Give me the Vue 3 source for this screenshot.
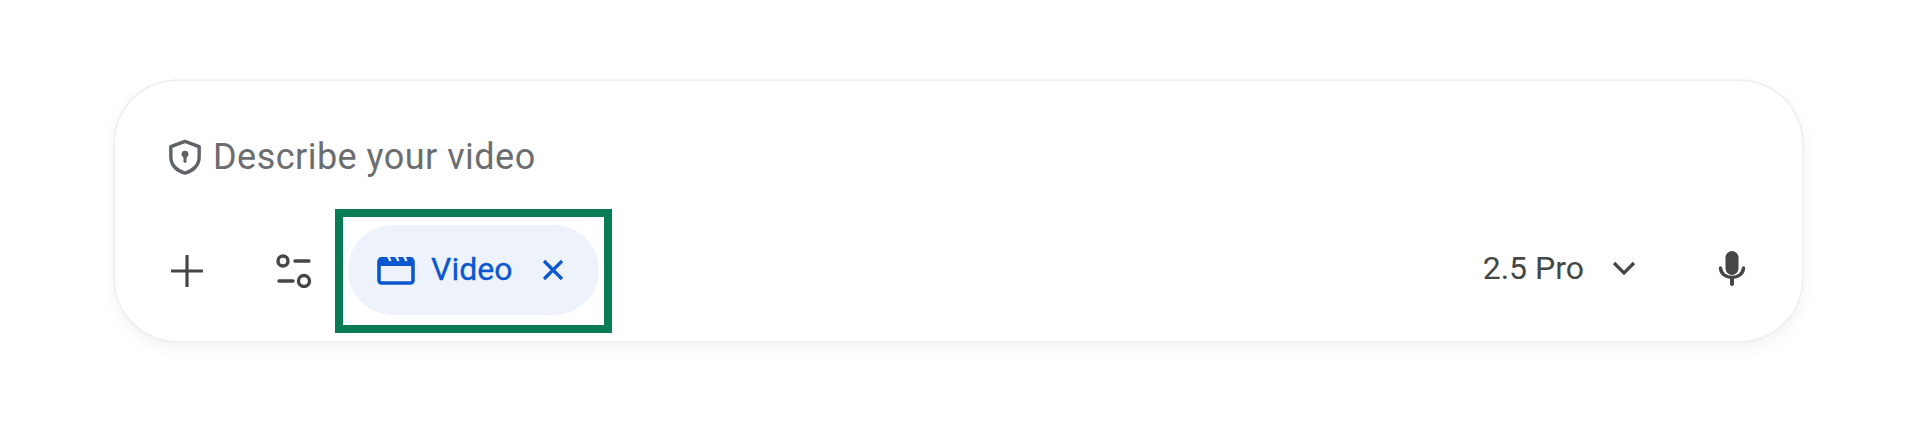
<script setup>
  const placeholder = "Describe your video";
  const model = "2.5 Pro";
</script>

<template>
  <div class="page">
    <div class="prompt">
      <div class="prompt__input">
        <svg class="shield" viewBox="0 0 36 38" fill="none">
          <path d="M18 2.500 33 8v11c0 8.500-6.200 14.800-15 17C9.200 33.800 3 27.500 3 19V8z" stroke="#5f6368" stroke-width="3.600" stroke-linejoin="round"/>
          <circle cx="18" cy="16" r="3.600" fill="#5f6368"/>
          <rect x="16.400" y="17" width="3.200" height="8" rx="1" fill="#5f6368"/>
        </svg>
        <span class="prompt__placeholder">{{ placeholder }}</span>
      </div>
      <div class="prompt__toolbar">
        <button class="tool tool--plus">
          <svg viewBox="0 0 32 32" width="32" height="32" fill="none">
            <path d="M16 1v30M1 16h30" stroke="#444746" stroke-width="3.200" stroke-linecap="round"/>
          </svg>
        </button>
        <button class="tool tool--tune">
          <svg viewBox="0 0 36 34" width="36" height="34" fill="none" stroke="#444746" stroke-width="3.400" stroke-linecap="round">
            <circle cx="7" cy="7" r="5"/>
            <path d="M19 7h14M3 27h14"/>
            <circle cx="28" cy="27" r="5.500"/>
          </svg>
        </button>
        <div class="highlight">
          <div class="chip">
            <svg class="chip__icon" viewBox="0 0 38 30" width="38" height="30" fill="none">
              <rect x="2" y="4" width="34" height="24" rx="2.500" stroke="#0b57d0" stroke-width="3.600"/>
              <rect x="2" y="2" width="34" height="9" rx="1.500" fill="#0b57d0"/>
              <path d="M11 1l2.500 5M19 1l2.500 5M27 1l2.500 5" stroke="#edf2fb" stroke-width="2.400"/>
            </svg>
            <span class="chip__label">Video</span>
            <svg class="chip__close" viewBox="0 0 22 22" width="22" height="22" fill="none">
              <path d="M2 2l18 18M20 2 2 20" stroke="#0b57d0" stroke-width="3.200"/>
            </svg>
          </div>
        </div>
        <div class="model">
          <span class="model__name">{{ model }}</span>
          <svg viewBox="0 0 24 14" width="24" height="14" fill="none">
            <path d="M2 2l10 10L22 2" stroke="#444746" stroke-width="3.200"/>
          </svg>
        </div>
        <svg class="mic" viewBox="0 0 28 36" width="28" height="36">
          <rect x="7.500" y="0" width="13" height="24" rx="6.500" fill="#444746"/>
          <path d="M2.500 17c.5 6 5.500 9.500 11.500 9.500S25 23 25.500 17" fill="none" stroke="#444746" stroke-width="3.400" stroke-linecap="round"/>
          <path d="M12 26h4v7.500L14 35.500l-2-2z" fill="#444746"/>
        </svg>
      </div>
    </div>
  </div>
</template>

<style>
  body{
    background: #ffffff;
  }
</style>

<style scoped>
  .page{
    height: 433px;
    box-sizing: border-box;
    padding: 81px 118px 0 115px;
    font-family: Roboto, "Liberation Sans", sans-serif;
    background: #ffffff;
  }

  /* card */
  .prompt{
    height: 260px;
    box-sizing: border-box;
    border-radius: 62px;
    background: #ffffff;
    box-shadow: 0 0 0 1.500px #eeeeee, 0 6px 18px rgba(0, 0, 0, 0.06);
    padding: 57px 0 0 53px;
    display: flex;
    flex-direction: column;
  }

  .prompt__input{
    display: flex;
    align-items: center;
    gap: 11px;
    height: 38px;
  }

  .shield{
    width: 34px;
    height: 38px;
    flex: none;
  }

  .prompt__placeholder{
    font-size: 36px;
    letter-spacing: 0.47px;
    color: #6b6d70;
  }

  /* bottom row */
  .prompt__toolbar{
    display: flex;
    align-items: center;
    margin-top: 33px;
    height: 124px;
  }

  .tool{
    border: none;
    background: none;
    padding: 0;
    display: flex;
  }

  .tool--plus{
    margin-left: 3px;
  }

  .tool--tune{
    margin-left: 73px;
  }

  .highlight{
    margin-left: 23px;
    width: 277px;
    height: 124px;
    box-sizing: border-box;
    border: 8px solid #087d55;
    padding: 8px 5px;
  }

  .chip{
    height: 90px;
    border-radius: 45px;
    background: #edf2fb;
    display: flex;
    align-items: center;
    padding-left: 29px;
  }

  .chip__label{
    font-size: 32px;
    color: #0b57d0;
    margin-left: 16px;
    margin-bottom: 2px;
    -webkit-text-stroke: 0.3px #0b57d0;
  }

  .chip__close{
    margin-left: 30px;
  }

  .model{
    margin-left: auto;
    margin-bottom: 7px;
    display: flex;
    align-items: center;
    gap: 28px;
  }

  .model__name{
    font-size: 32px;
    color: #444746;
  }

  .mic{
    margin: 0 56px 5px 82px;
  }
</style>
